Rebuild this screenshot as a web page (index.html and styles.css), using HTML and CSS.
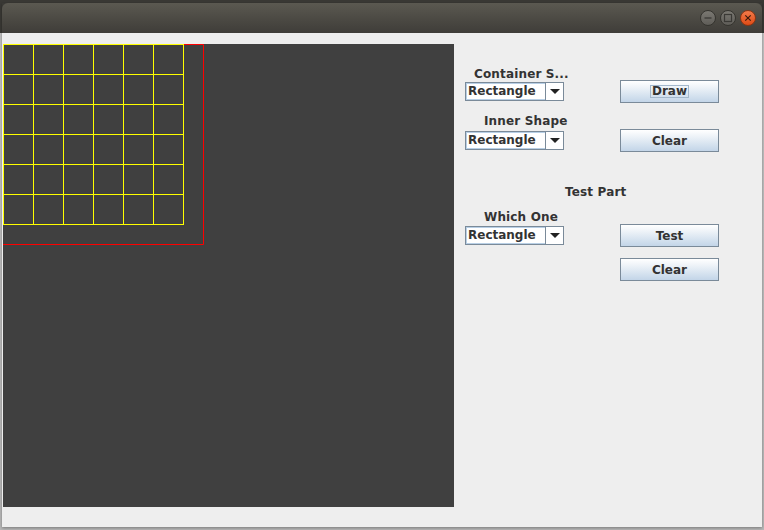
FILE: index.html
```html
<!DOCTYPE html>
<html>
<head>
<meta charset="utf-8">
<link rel="stylesheet" href="styles.css">
</head>
<body>
<div class="window">
  <div class="titlebar">
    <div class="tb-btn tb-min"><svg width="16" height="16" viewBox="0 0 16 16"><line x1="4.5" y1="8" x2="11.5" y2="8" stroke="#3a3935" stroke-width="1.3"/></svg></div>
    <div class="tb-btn tb-max"><svg width="16" height="16" viewBox="0 0 16 16"><rect x="4.5" y="4.5" width="7" height="7" fill="none" stroke="#3a3935" stroke-width="1.2"/></svg></div>
    <div class="tb-btn tb-close"><svg width="16" height="16" viewBox="0 0 16 16"><path d="M5.3 5.3 L10.7 10.7 M10.7 5.3 L5.3 10.7" stroke="#3b1a0c" stroke-width="1.2"/></svg></div>
  </div>
  <div class="content">
    <div class="canvas">
      <svg class="drawing" width="451" height="463" viewBox="0 0 451 463">
        <path d="M0 0.5 H200.5 V200.5 H0" fill="none" stroke="#ff0000" stroke-width="1"/>
        <g stroke="#ffff00" stroke-width="1" fill="none">
          <line x1="0.5" y1="0" x2="0.5" y2="181"/>
          <line x1="30.5" y1="0" x2="30.5" y2="181"/>
          <line x1="60.5" y1="0" x2="60.5" y2="181"/>
          <line x1="90.5" y1="0" x2="90.5" y2="181"/>
          <line x1="120.5" y1="0" x2="120.5" y2="181"/>
          <line x1="150.5" y1="0" x2="150.5" y2="181"/>
          <line x1="180.5" y1="0" x2="180.5" y2="181"/>
          <line x1="0" y1="0.5" x2="181" y2="0.5"/>
          <line x1="0" y1="30.5" x2="181" y2="30.5"/>
          <line x1="0" y1="60.5" x2="181" y2="60.5"/>
          <line x1="0" y1="90.5" x2="181" y2="90.5"/>
          <line x1="0" y1="120.5" x2="181" y2="120.5"/>
          <line x1="0" y1="150.5" x2="181" y2="150.5"/>
          <line x1="0" y1="180.5" x2="181" y2="180.5"/>
        </g>
      </svg>
    </div>
    <div class="panel">
      <div class="label l1">Container S...</div>
      <div class="row r1">
        <div class="combo"><span class="combo-text">Rectangle</span><span class="combo-arrow"><svg width="10" height="6" viewBox="0 0 10 6"><path d="M0 0 L10 0 L5 5 Z" fill="#222"/></svg></span></div>
        <button class="btn"><span class="focus">Draw</span></button>
      </div>
      <div class="label l2">Inner Shape</div>
      <div class="row r2">
        <div class="combo"><span class="combo-text">Rectangle</span><span class="combo-arrow"><svg width="10" height="6" viewBox="0 0 10 6"><path d="M0 0 L10 0 L5 5 Z" fill="#222"/></svg></span></div>
        <button class="btn">Clear</button>
      </div>
      <div class="label l3">Test Part</div>
      <div class="label l4">Which One</div>
      <div class="row r3">
        <div class="combo"><span class="combo-text">Rectangle</span><span class="combo-arrow"><svg width="10" height="6" viewBox="0 0 10 6"><path d="M0 0 L10 0 L5 5 Z" fill="#222"/></svg></span></div>
        <button class="btn">Test</button>
      </div>
      <div class="row r4">
        <button class="btn">Clear</button>
      </div>
    </div>
  </div>
</div>
</body>
</html>
```

FILE: styles.css
```css
html, body {
  margin: 0;
  padding: 0;
}
body {
  width: 764px;
  height: 530px;
  overflow: hidden;
  background: linear-gradient(to bottom, #3a3935 0, #3a3935 33px, #c4c4c4 33px, #b8b8b8 100%);
  font-family: "DejaVu Sans", sans-serif;
}
.window {
  margin-left: 2px;
  margin-top: 3px;
  width: 760px;
  box-shadow: 0 1px 3px rgba(0,0,0,0.35);
}
.titlebar {
  height: 30px;
  border-radius: 6px 6px 0 0;
  background: linear-gradient(to bottom, #5b5951 0%, #4b4943 55%, #3f3d39 100%);
  display: flex;
  align-items: center;
  justify-content: flex-end;
  gap: 4px;
  padding-right: 6px;
  box-sizing: border-box;
}
.tb-btn {
  width: 16px;
  height: 16px;
  border-radius: 50%;
  display: flex;
  align-items: center;
  justify-content: center;
  box-sizing: border-box;
}
.tb-min, .tb-max {
  background: linear-gradient(to bottom, #7a7872, #5f5d58);
  border: 1px solid #35342f;
}
.tb-close {
  background: linear-gradient(to bottom, #f27a4a, #df4b16);
  border: 1px solid #8a3513;
}
.tb-btn svg {
  display: block;
  flex: none;
}
.content {
  height: 494px;
  background: #eeeeee;
  display: flex;
  align-items: flex-start;
  padding-top: 11px;
  padding-left: 1px;
  box-sizing: border-box;
}
.canvas {
  width: 451px;
  height: 463px;
  background: #404040;
  flex: none;
}
.drawing {
  display: block;
}
.panel {
  flex: 1;
  display: flex;
  flex-direction: column;
  padding-top: 22px;
  padding-left: 11px;
}
.label {
  font-size: 12px;
  font-weight: bold;
  color: #333333;
  line-height: 16px;
  height: 14px;
  white-space: nowrap;
  letter-spacing: 0.15px;
}
.l1 { padding-left: 9px; }
.l2 { padding-left: 19px; margin-top: 10px; }
.l3 { padding-left: 100px; margin-top: 32px; }
.l4 { padding-left: 19px; margin-top: 11px; }
.row {
  display: flex;
  align-items: center;
  height: 23px;
}
.r2 { margin-top: 2px; }
.r3 { margin-top: 1px; }
.r4 { margin-top: 11px; justify-content: flex-start; padding-left: 155px; }
.combo {
  width: 99px;
  height: 19px;
  box-sizing: border-box;
  border: 1px solid #7a8a99;
  background: #ffffff;
  display: flex;
}
.combo-text {
  flex: 1;
  font-size: 12px;
  font-weight: bold;
  color: #333333;
  line-height: 15px;
  padding-left: 1px;
  border: 1px solid #b8cfe5;
  border-right: none;
  white-space: nowrap;
}
.combo-arrow {
  width: 18px;
  border-left: 1px solid #7a8a99;
  display: flex;
  align-items: center;
  justify-content: center;
  padding-top: 1px;
  box-sizing: border-box;
}
.combo-arrow svg { display: block; }
.btn {
  margin: 0 0 0 56px;
  width: 99px;
  height: 23px;
  box-sizing: border-box;
  border: 1px solid #7a8a99;
  background: linear-gradient(to bottom, #ffffff 0%, #eef3f8 30%, #d5e2ef 70%, #c3d5e8 100%);
  font-family: "DejaVu Sans", sans-serif;
  font-size: 12px;
  font-weight: bold;
  color: #333333;
  padding: 0;
  display: flex;
  align-items: center;
  justify-content: center;
}
.r4 .btn { margin-left: 0; }
.focus {
  border: 1px solid #a3b8cc;
  padding: 0 1px;
  line-height: 11px;
}
```
